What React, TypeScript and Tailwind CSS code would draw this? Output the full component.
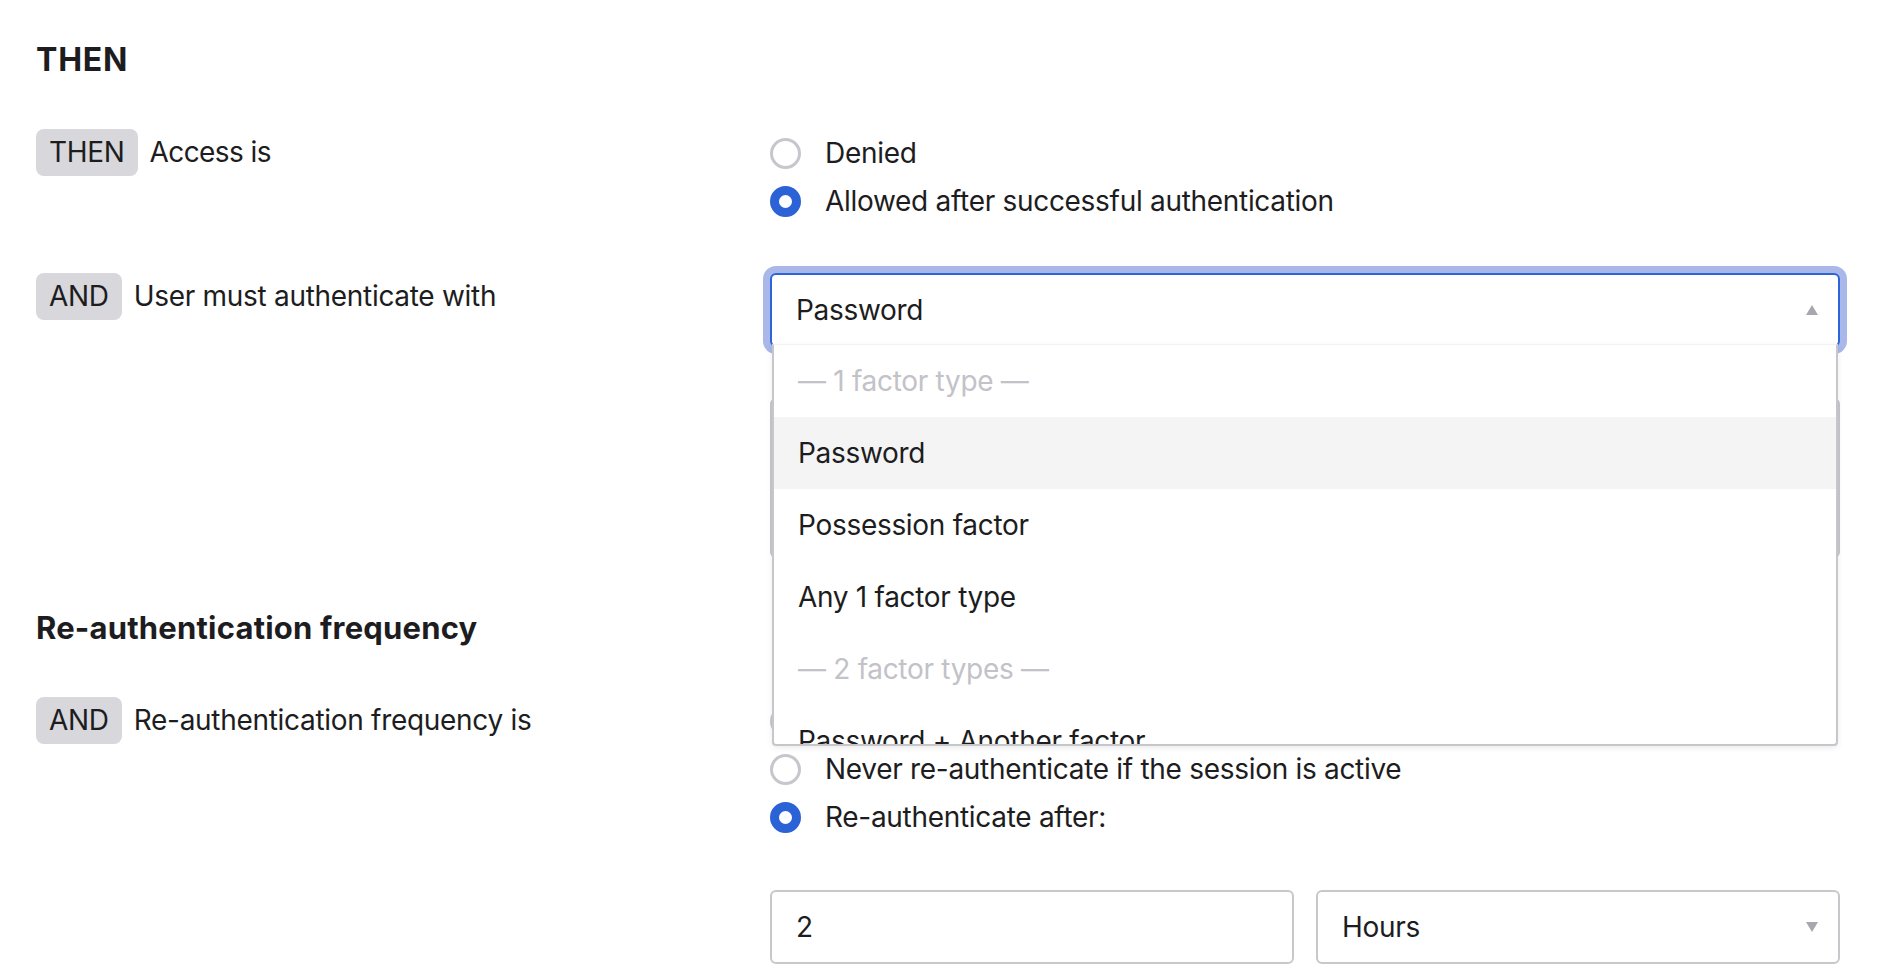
import React from "react";

function Badge({ children }: { children: React.ReactNode }) {
  return (
    <span className="shrink-0 rounded-[8px] bg-[#d7d7dc] px-[13px] py-[6px] leading-[35px]">
      {children}
    </span>
  );
}

function Radio({ checked = false }: { checked?: boolean }) {
  return checked ? (
    <span className="h-[31px] w-[31px] shrink-0 rounded-full border-[9px] border-[#2b62d6] bg-white" />
  ) : (
    <span className="h-[31px] w-[31px] shrink-0 rounded-full border-[3px] border-[#c6c6cc] bg-white" />
  );
}

function RadioRow({ label, checked }: { label: string; checked?: boolean }) {
  return (
    <label className="flex h-[48px] items-center gap-6">
      <Radio checked={checked} />
      <span className="leading-[35px]">{label}</span>
    </label>
  );
}

function Caret({ up }: { up?: boolean }) {
  return (
    <svg width="12" height="10" viewBox="0 0 12 10" className="shrink-0">
      {up ? (
        <path d="M6 0 L12 10 L0 10 Z" fill="#a7a7b0" />
      ) : (
        <path d="M0 0 L12 0 L6 10 Z" fill="#a7a7b0" />
      )}
    </svg>
  );
}

const options = [
  { label: "— 1 factor type —", header: true },
  { label: "Password", active: true },
  { label: "Possession factor" },
  { label: "Any 1 factor type" },
  { label: "— 2 factor types —", header: true },
  { label: "Password + Another factor" },
];

export default function App() {
  return (
    <div className="min-h-screen bg-white pl-[36px] pr-[42px] pt-[40px] font-[family-name:Inter,sans-serif] text-[28px] tracking-[-0.3px] text-[#1d1d21]">
      {/* THEN */}
      <h2 className="text-[32px] font-bold leading-[40px] tracking-[0.8px]">THEN</h2>

      <div className="mt-[49px] flex">
        <div className="flex w-[734px] shrink-0 items-center gap-3 self-start">
          <Badge>THEN</Badge>
          <span className="leading-[35px] tracking-[-0.6px]">Access is</span>
        </div>
        <div className="flex flex-1 flex-col">
          <RadioRow label="Denied" />
          <RadioRow label="Allowed after successful authentication" checked />
        </div>
      </div>

      <div className="mt-[48px] flex">
        <div className="flex w-[734px] shrink-0 items-center gap-3 self-start">
          <Badge>AND</Badge>
          <span className="leading-[35px]">User must authenticate with</span>
        </div>
        <div className="flex flex-1 flex-col">
          {/* open select */}
          <div className="relative z-10">
            <div className="flex h-[74px] items-center justify-between rounded-[6px] border-2 border-[#2d65d8] bg-white pl-6 pr-5 ring-[7px] ring-[#a9b8e9]">
              <span className="leading-[35px]">Password</span>
              <Caret up />
            </div>
            <div className="absolute left-[2px] right-[2px] top-[71px] h-[402px] overflow-hidden rounded-b-[4px] border-2 border-t border-[#c6c6cb] border-t-[#f2f2f2] bg-white shadow-[0_2px_6px_rgba(0,0,0,0.08)]">
              {options.map((o) => (
                <div
                  key={o.label}
                  className={
                    "flex h-[72px] shrink-0 items-center pl-6 leading-[35px] " +
                    (o.header ? "text-[#c2c2c8]" : "") +
                    (o.active ? "bg-[#f4f4f5]" : "")
                  }
                >
                  {o.label}
                </div>
              ))}
            </div>
          </div>
          <div className="mt-[51px] h-[160px] rounded-[6px] border-2 border-[#c7c7cc]" />
        </div>
      </div>

      {/* Re-authentication frequency */}
      <h2 className="mt-[50px] text-[31px] font-bold leading-[40px] tracking-[0.2px]">Re-authentication frequency</h2>

      <div className="mt-[49px] flex">
        <div className="flex w-[734px] shrink-0 items-center gap-3 self-start">
          <Badge>AND</Badge>
          <span className="leading-[35px]">Re-authentication frequency is</span>
        </div>
        <div className="flex flex-1 flex-col">
          <RadioRow label="Re-authenticate at every sign-in" />
          <RadioRow label="Never re-authenticate if the session is active" />
          <RadioRow label="Re-authenticate after:" checked />
          <div className="mt-[49px] grid grid-cols-2 gap-[22px]">
            <div className="flex h-[74px] items-center rounded-[6px] border-2 border-[#c7c7cc] pl-6">
              <span className="leading-[35px]">2</span>
            </div>
            <div className="flex h-[74px] items-center justify-between rounded-[6px] border-2 border-[#c7c7cc] pl-6 pr-5">
              <span className="leading-[35px]">Hours</span>
              <Caret />
            </div>
          </div>
        </div>
      </div>
    </div>
  );
}
